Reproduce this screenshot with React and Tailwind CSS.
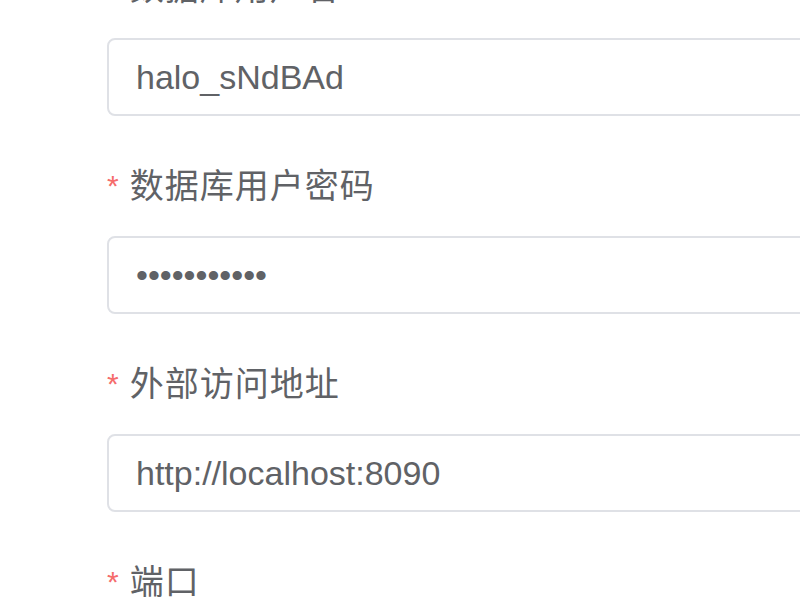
import React from 'react';

const fields = [
  { label: '数据库用户名', value: 'halo_sNdBAd', type: 'text' },
  { label: '数据库用户密码', value: 'halo_pass12', type: 'password' },
  { label: '外部访问地址', value: 'http://localhost:8090', type: 'text' },
  { label: '端口', value: '8090', type: 'text' },
];

function FormItem({ label, value, type }) {
  return (
    <div className="flex flex-col">
      <label className="flex h-[40px] items-center text-[34px] leading-[40px] text-[#606266]">
        <span className="mr-[11px] self-start text-[30px] text-[#f56c6c]">*</span>
        <span className="tracking-[1px]">{label}</span>
      </label>
      <input
        readOnly
        type={type}
        value={value}
        className="mt-[30px] h-[78px] w-[760px] rounded-[8px] border-2 border-[#dfe1e6] bg-white px-[27px] text-[34px] text-[#606266] outline-none"
      />
    </div>
  );
}

export default function App() {
  return (
    <div
      className="h-[600px] w-[800px] overflow-hidden bg-white"
      style={{ fontFamily: '"Liberation Sans", "Noto Sans CJK SC", sans-serif' }}
    >
      <div className="-mt-[32px] flex flex-col gap-[50px] pl-[107px]">
        {fields.map((f) => (
          <FormItem key={f.label} {...f} />
        ))}
      </div>
    </div>
  );
}
